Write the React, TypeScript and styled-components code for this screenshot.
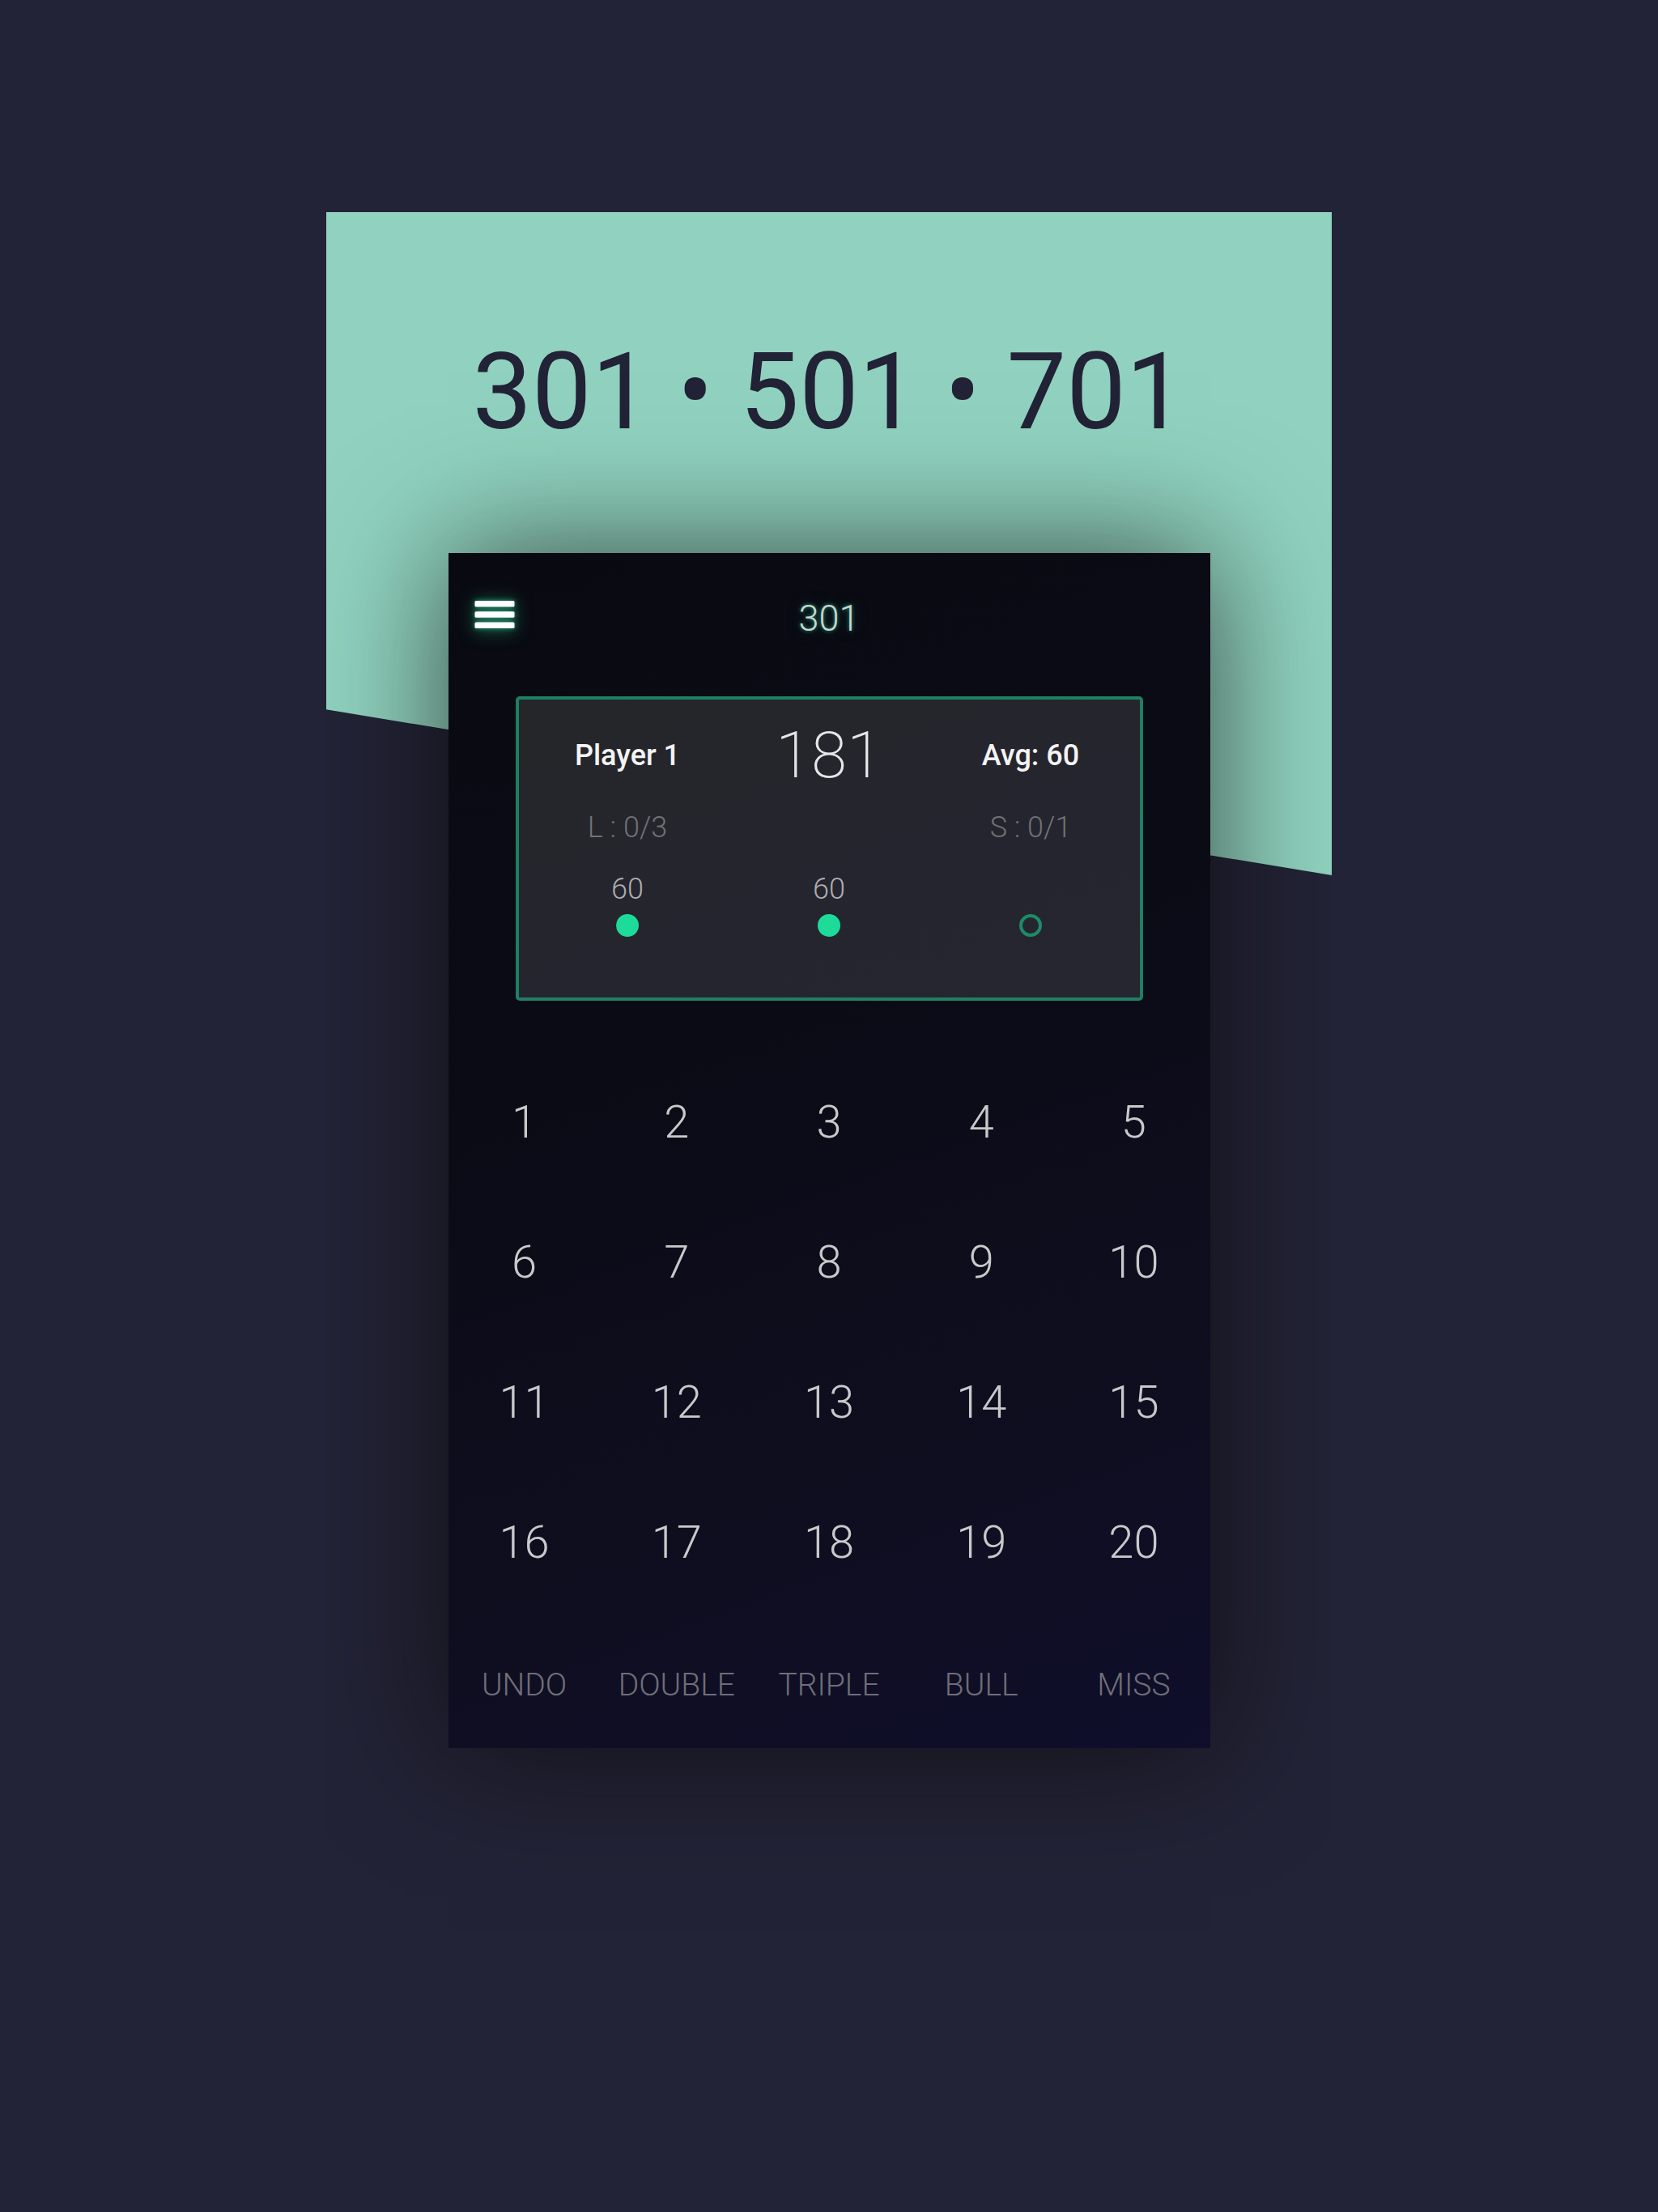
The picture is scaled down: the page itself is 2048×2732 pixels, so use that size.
import React from "react";
import styled, { createGlobalStyle } from "styled-components";

const GlobalStyle = createGlobalStyle`
  * { box-sizing: border-box; }
  body {
    margin: 0;
    background: #222336;
    font-family: Roboto, "Liberation Sans", sans-serif;
  }
`;

const Page = styled.main`
  min-height: 100vh;
  padding: 262px 24px;
  display: flex;
  justify-content: center;
  align-items: flex-start;
  background: #222336;
`;

const Stage = styled.section`
  width: 100%;
  max-width: 1242px;
  display: grid;
  grid-template-columns: minmax(0, 1fr);
  overflow-x: clip;
`;

const Backdrop = styled.div`
  grid-area: 1 / 1;
  height: 819px;
  background: #90d2bf;
  clip-path: polygon(0 0, 100% 0, 100% 100%, 0 75%);
`;

const Content = styled.div`
  grid-area: 1 / 1;
  z-index: 1;
  display: flex;
  flex-direction: column;
  align-items: center;
  padding-top: 146px;
`;

const Modes = styled.h1`
  margin: 0 0 123px;
  font-size: 131px;
  line-height: 152px;
  font-weight: 400;
  color: #222336;
`;

const Panel = styled.article`
  width: 100%;
  max-width: 941px;
  background: linear-gradient(160deg, #090a11 0%, #0b0b16 40%, #0f0e20 75%, #0f0e2b 100%);
  box-shadow: 0 0 150px rgba(12, 8, 6, 0.68);
`;

const Header = styled.header`
  display: grid;
  grid-template-columns: 1fr auto 1fr;
  align-items: start;
  padding: 54px 32px 69px;
`;

const MenuButton = styled.button`
  justify-self: start;
  display: flex;
  padding: 0;
  border: 0;
  background: none;
  cursor: pointer;
  filter: drop-shadow(0 0 3px #2a9c78) drop-shadow(0 2px 10px rgba(24, 140, 96, 0.7));
`;

const Title = styled.h2`
  margin: 0;
  font-size: 45px;
  line-height: 54px;
  font-weight: 300;
  color: #c6d8d2;
  text-shadow: 0 0 5px #2a9c78, 0 0 20px rgba(31, 128, 99, 0.4);
`;

const Card = styled.section`
  margin: 0 83px;
  padding: 21px 10px 75px;
  border: 4px solid #1e8062;
  border-radius: 5px;
  background: linear-gradient(160deg, #252629, #25252f 60%, #262630);
`;

const CardRow = styled.div<{ $space?: number }>`
  display: grid;
  grid-template-columns: repeat(3, minmax(0, 1fr));
  align-items: center;
  justify-items: center;
  margin-top: ${(p) => p.$space ?? 0}px;
`;

const Label = styled.span<{ $tone: "strong" | "muted" | "soft" }>`
  font-size: 36px;
  line-height: 44px;
  min-height: 44px;
  font-weight: ${(p) => (p.$tone === "strong" ? 500 : 300)};
  color: ${(p) => ({ strong: "#f3f3f4", muted: "#717177", soft: "#adadb0" })[p.$tone]};
`;

const Score = styled.strong`
  font-size: 80px;
  line-height: 96px;
  font-weight: 200;
  color: #e6e6e8;
`;

const Throw = styled.div`
  display: flex;
  flex-direction: column;
  align-items: center;
  gap: 9px;
`;

const Dot = styled.i<{ $filled: boolean }>`
  width: 28px;
  height: 28px;
  border-radius: 50%;
  border: 4px solid ${(p) => (p.$filled ? "#1ddb98" : "#1e8a67")};
  background: ${(p) => (p.$filled ? "#1ddb98" : "transparent")};
`;

const Keypad = styled.div`
  display: grid;
  grid-template-columns: repeat(5, minmax(0, 1fr));
  margin-top: 63px;
`;

const Actions = styled.div`
  display: grid;
  grid-template-columns: repeat(5, minmax(0, 1fr));
  padding-top: 12px;
`;

const Key = styled.button`
  height: 173px;
  padding: 0;
  border: 0;
  background: none;
  font: 300 56px/68px Roboto, "Liberation Sans", sans-serif;
  color: #c9c9cb;
  cursor: pointer;
`;

const ActionKey = styled(Key)`
  height: 156px;
  font-size: 39px;
  line-height: 48px;
  color: #6f6e79;
`;

const numbers = Array.from({ length: 20 }, (_, i) => i + 1);
const actions = ["UNDO", "DOUBLE", "TRIPLE", "BULL", "MISS"];
const throws: (number | null)[] = [60, 60, null];

export default function App() {
  return (
    <>
      <GlobalStyle />
      <Page>
        <Stage>
          <Backdrop />
          <Content>
            <Modes>301 • 501 • 701</Modes>
            <Panel>
              <Header>
                <MenuButton type="button" aria-label="Menu">
                  <svg width="50" height="44" viewBox="0 0 50 44" fill="#ffffff">
                    <rect x="0.5" y="5" width="49" height="7.5" rx="1.5" />
                    <rect x="0.5" y="18.2" width="49" height="7.5" rx="1.5" />
                    <rect x="0.5" y="31.4" width="49" height="7.5" rx="1.5" />
                  </svg>
                </MenuButton>
                <Title>301</Title>
              </Header>
              <Card>
                <CardRow>
                  <Label $tone="strong">Player 1</Label>
                  <Score>181</Score>
                  <Label $tone="strong">Avg: 60</Label>
                </CardRow>
                <CardRow $space={19}>
                  <Label $tone="muted">L : 0/3</Label>
                  <span />
                  <Label $tone="muted">S : 0/1</Label>
                </CardRow>
                <CardRow $space={32}>
                  {throws.map((points, i) => (
                    <Throw key={i}>
                      <Label $tone="soft">{points}</Label>
                      <Dot $filled={points !== null} />
                    </Throw>
                  ))}
                </CardRow>
              </Card>
              <Keypad>
                {numbers.map((n) => (
                  <Key key={n} type="button">{n}</Key>
                ))}
              </Keypad>
              <Actions>
                {actions.map((name) => (
                  <ActionKey key={name} type="button">{name}</ActionKey>
                ))}
              </Actions>
            </Panel>
          </Content>
        </Stage>
      </Page>
    </>
  );
}
